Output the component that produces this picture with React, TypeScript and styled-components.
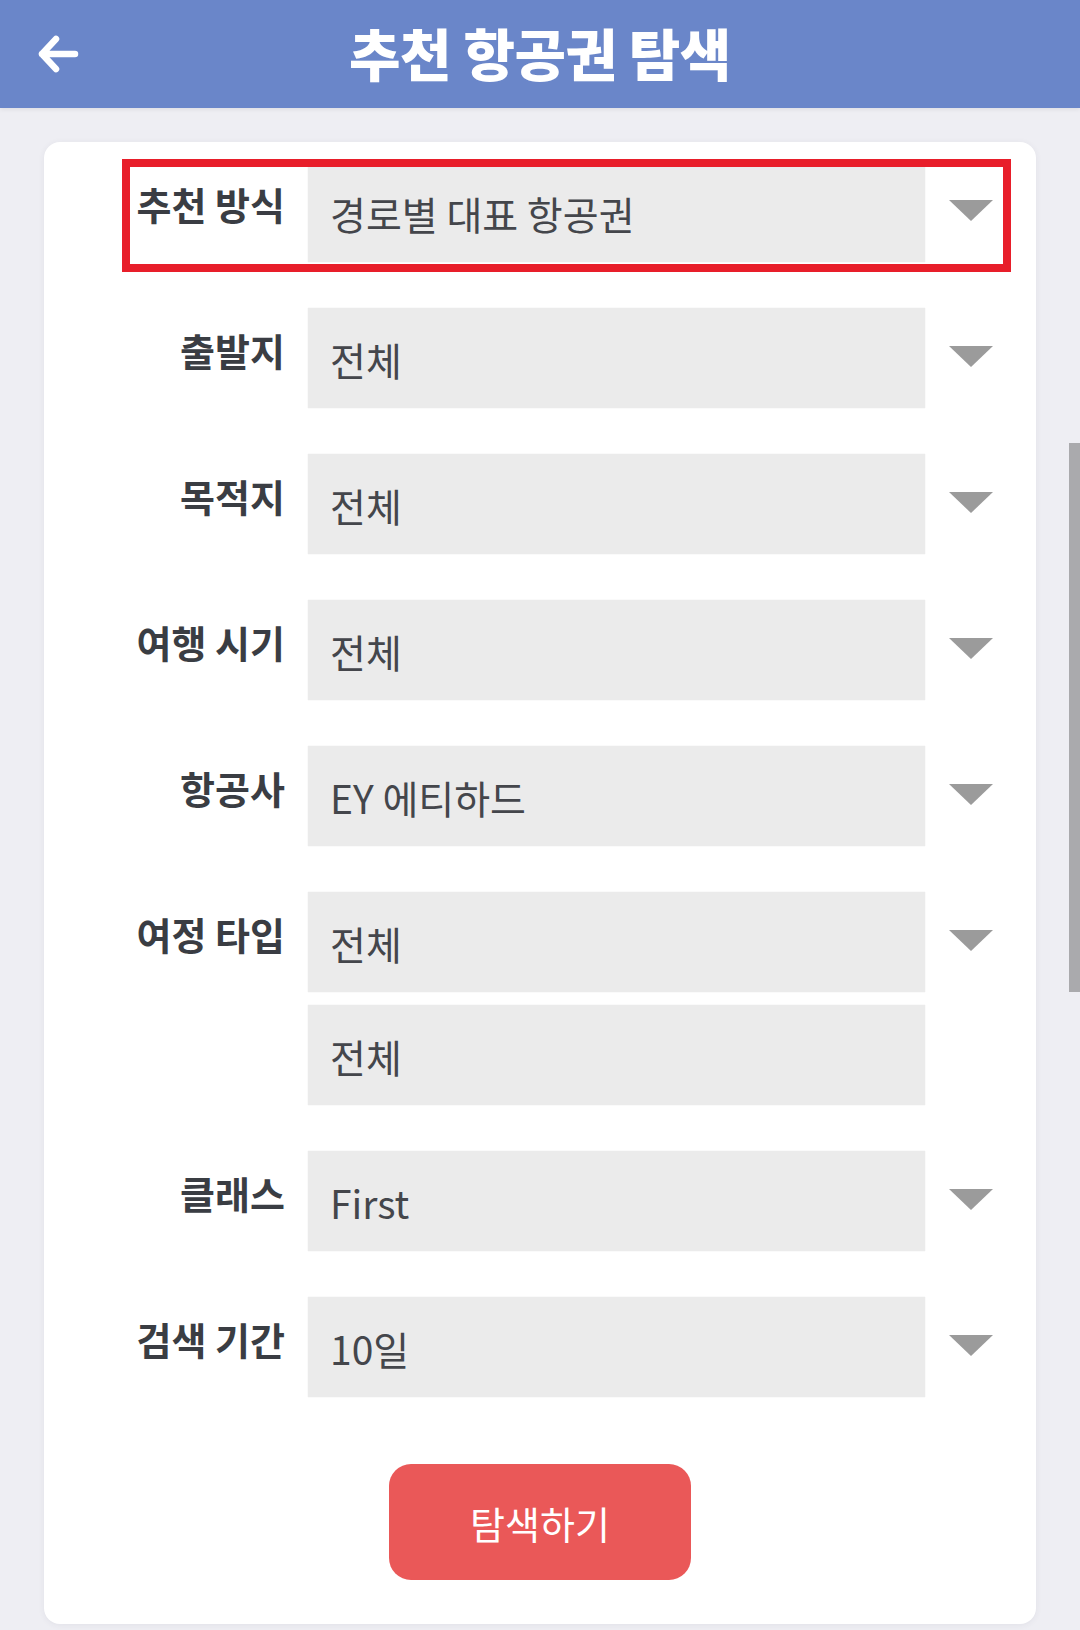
import React from "react";
import styled, { createGlobalStyle, css } from "styled-components";

const GlobalStyle = createGlobalStyle`
  html, body {
    margin: 0;
    padding: 0;
    background: #eeeef3;
  }
  body {
    font-family: "Noto Sans CJK KR", "Noto Sans", sans-serif;
    overflow: hidden;
  }
  * { box-sizing: border-box; }
`;

const Page = styled.div`
  width: 1080px;
  min-height: 1630px;
  background: #eeeef3;
  display: flex;
  flex-direction: column;
`;

const Header = styled.header`
  height: 108px;
  background: #6a86c9;
  display: flex;
  align-items: center;
  position: relative;
  box-shadow: 0 2px 4px rgba(0, 0, 0, 0.06);
`;

const BackButton = styled.button`
  position: absolute;
  left: 34px;
  top: 32px;
  width: 48px;
  height: 44px;
  border: none;
  background: transparent;
  padding: 0;
  display: flex;
  align-items: center;
  justify-content: center;
`;

const Title = styled.h1`
  flex: 1;
  margin: 0;
  text-align: center;
  color: #ffffff;
  font-size: 56px;
  font-weight: 900;
  letter-spacing: -0.5px;
  line-height: 1;
  padding-bottom: 4px;
`;

const Main = styled.main`
  padding: 34px 44px 0 44px;
`;

const Card = styled.section`
  background: #ffffff;
  border-radius: 16px;
  box-shadow: 0 1px 6px rgba(60, 60, 90, 0.07);
  padding: 20px 25px 44px 78px;
  display: flex;
  flex-direction: column;
  gap: 46px;
`;

const Row = styled.div<{ $highlight?: boolean }>`
  display: grid;
  grid-template-columns: 186px 617px 86px;
  position: relative;
  ${(p) =>
    p.$highlight &&
    css`
      &::after {
        content: "";
        position: absolute;
        left: 0;
        right: 0;
        top: -3px;
        bottom: -10px;
        border: 8px solid #e81e2a;
        pointer-events: none;
      }
    `}
`;

const Label = styled.div`
  text-align: right;
  font-size: 38px;
  font-weight: 700;
  color: #3a3d43;
  line-height: 52px;
  padding-top: 16px;
  padding-right: 23px;
  white-space: nowrap;
`;

const Fields = styled.div`
  display: flex;
  flex-direction: column;
  gap: 13px;
`;

const SelectBox = styled.div`
  height: 100px;
  background: #ebebeb;
  box-shadow: 0 0 1px rgba(0, 0, 0, 0.12);
  display: flex;
  align-items: center;
  padding: 2px 0 0 22px;
  font-size: 39px;
  font-weight: 400;
  color: #44464b;
  white-space: nowrap;
`;

const ArrowCell = styled.div`
  height: 100px;
  display: flex;
  align-items: center;
  justify-content: center;
  padding-left: 5px;
  padding-bottom: 4px;
`;

const Caret = styled.div`
  width: 0;
  height: 0;
  border-left: 22px solid transparent;
  border-right: 22px solid transparent;
  border-top: 21px solid #9b9b9b;
`;

const ButtonWrap = styled.div`
  display: flex;
  justify-content: center;
  padding-top: 21px;
  padding-right: 53px;
`;

const SearchButton = styled.button`
  width: 302px;
  height: 116px;
  border: none;
  border-radius: 22px;
  background: #ea5858;
  color: #ffffff;
  font-family: "Noto Sans CJK KR", "Noto Sans", sans-serif;
  font-size: 38px;
  font-weight: 400;
  padding-top: 2px;
`;

const ScrollThumb = styled.div`
  position: fixed;
  right: 0;
  top: 443px;
  width: 11px;
  height: 549px;
  background: #aaaaad;
`;

type Field = { label: string; values: string[]; highlight?: boolean };

const fields: Field[] = [
  { label: "추천 방식", values: ["경로별 대표 항공권"], highlight: true },
  { label: "출발지", values: ["전체"] },
  { label: "목적지", values: ["전체"] },
  { label: "여행 시기", values: ["전체"] },
  { label: "항공사", values: ["EY 에티하드"] },
  { label: "여정 타입", values: ["전체", "전체"] },
  { label: "클래스", values: ["First"] },
  { label: "검색 기간", values: ["10일"] },
];

const BackArrow = () => (
  <svg width="42" height="38" viewBox="0 0 42 38" fill="none">
    <path
      d="M19 4 L5 19 L19 34 M5 19 H38"
      stroke="#ffffff"
      strokeWidth="6.5"
      strokeLinecap="round"
      strokeLinejoin="round"
    />
  </svg>
);

export default function App() {
  return (
    <>
      <GlobalStyle />
      <Page>
        <Header>
          <BackButton aria-label="back">
            <BackArrow />
          </BackButton>
          <Title>추천 항공권 탐색</Title>
        </Header>
        <Main>
          <Card>
            {fields.map((f) => (
              <Row key={f.label} $highlight={f.highlight}>
                <Label>{f.label}</Label>
                <Fields>
                  {f.values.map((v, i) => (
                    <SelectBox key={i}>{v}</SelectBox>
                  ))}
                </Fields>
                <ArrowCell>
                  <Caret />
                </ArrowCell>
              </Row>
            ))}
            <ButtonWrap>
              <SearchButton>탐색하기</SearchButton>
            </ButtonWrap>
          </Card>
        </Main>
        <ScrollThumb />
      </Page>
    </>
  );
}
